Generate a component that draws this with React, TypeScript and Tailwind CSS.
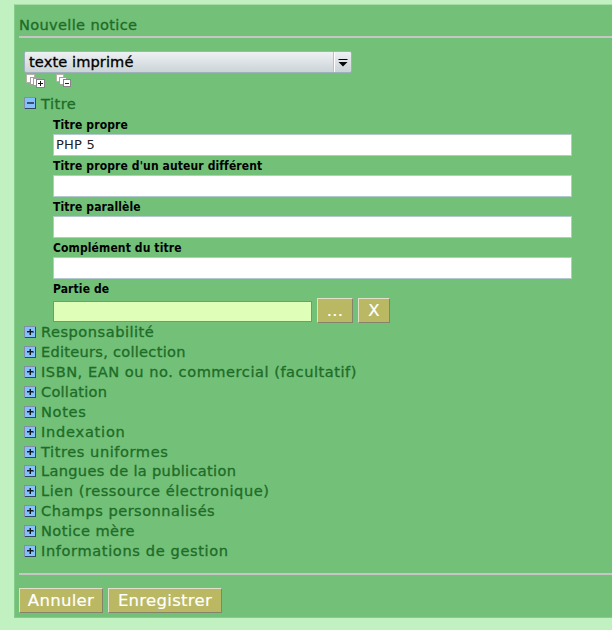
const sections: { label: string; tracking: string; height: string }[] = [
  { label: 'Responsabilité', tracking: 'tracking-[0.48px]', height: 'h-[20px]' },
  { label: 'Editeurs, collection', tracking: 'tracking-[0.25px]', height: 'h-[20px]' },
  { label: 'ISBN, EAN ou no. commercial (facultatif)', tracking: 'tracking-[0.5px]', height: 'h-[20px]' },
  { label: 'Collation', tracking: 'tracking-[0.22px]', height: 'h-[20px]' },
  { label: 'Notes', tracking: 'tracking-[0.62px]', height: 'h-[20px]' },
  { label: 'Indexation', tracking: 'tracking-[0.7px]', height: 'h-[20px]' },
  { label: 'Titres uniformes', tracking: 'tracking-[0.53px]', height: 'h-[19px]' },
  { label: 'Langues de la publication', tracking: 'tracking-[0.3px]', height: 'h-[20px]' },
  { label: 'Lien (ressource électronique)', tracking: 'tracking-[0.5px]', height: 'h-[20px]' },
  { label: 'Champs personnalisés', tracking: 'tracking-[0.45px]', height: 'h-[20px]' },
  { label: 'Notice mère', tracking: 'tracking-[0.42px]', height: 'h-[20px]' },
  { label: 'Informations de gestion', tracking: 'tracking-[0.58px]', height: 'h-[20px]' },
];

function Toggle({ open = false }: { open?: boolean }) {
  return (
    <svg width="12" height="12" viewBox="0 0 12 12" shapeRendering="crispEdges" className="mt-px shrink-0">
      <rect width="12" height="12" fill="#7f8fa6" />
      <rect x="1" y="1" width="11" height="11" fill="#30485e" />
      <rect x="1" y="1" width="10" height="10" fill="#85c0fc" />
      {open ? (
        <path d="M3 5h7v2H3z" fill="#35536f" />
      ) : (
        <>
          <path d="M3 5h7v2H3zM5 3h2v6H5z" fill="#4b6f94" />
          <path d="M3 5h6v1H3zM6 3h1v6H6z" fill="#101820" />
        </>
      )}
    </svg>
  );
}

function Stack({ plus = false }: { plus?: boolean }) {
  return (
    <svg width="19" height="14" viewBox="0 0 19 14" shapeRendering="crispEdges" className="shrink-0">
      {plus ? (
        <>
          <path d="M.5.5h8v8h-8z" fill="#fff" stroke="#b3b3a8" />
          <path d="M4.500 3.500h7v7h-7z" fill="#fff" stroke="#a2a2a2" />
          <path d="M7.500 4.500h7v7h-7z" fill="#fff" stroke="#a2a2a2" />
          <path d="M10.500 5.500h8v8h-8z" fill="#fff" stroke="#858585" />
          <path d="M12 9h5v1h-5zM14 7h1v5h-1z" fill="#111" />
        </>
      ) : (
        <>
          <path d="M.5.5h7v7h-7z" fill="#fff" stroke="#b3b3a8" />
          <path d="M3.500 3.500h7v7h-7z" fill="#fff" stroke="#a2a2a2" />
          <path d="M7.500 5.500h7v7h-7z" fill="#fff" stroke="#858585" />
          <path d="M9 9h4v1H9z" fill="#222" />
        </>
      )}
    </svg>
  );
}

const labelText = "font-['DejaVu_Sans_Condensed','DejaVu_Sans',sans-serif] text-[12px] leading-[21px] tracking-[0.12px] font-bold text-black";

function Field({ label, value = '' }: { label: string; value?: string }) {
  return (
    <div className="flex h-[41px] shrink-0 flex-col">
      <label className={`h-[19px] ${labelText}`}>{label}</label>
      <input
        defaultValue={value}
        aria-label={label}
        className="h-[22px] w-[519px] border border-[#b4c8cf] bg-white px-[2px] pb-[2px] text-[13px] tracking-[0.2px] text-[#222] outline-none"
      />
    </div>
  );
}

const button =
  'border border-t-[#e2e0c8] border-l-[#e2e0c8] border-r-[#85836a] border-b-[#85836a] bg-[#bab863] text-white text-center whitespace-nowrap text-[16.5px] leading-[23px] h-[25px] tracking-[0.3px] [-webkit-text-stroke:0.2px_#fff]';

const heading = 'text-[13.5px] text-[#1e6c28] [-webkit-text-stroke:0.3px_#1e6c28]';

const wide = 'inline-block origin-left scale-x-[1.08]';

export default function App() {
  return (
    <div className="h-[630px] w-[612px] overflow-hidden bg-[#c1f1c1] pt-[4px] pl-[14px] font-['DejaVu_Sans',sans-serif]">
      <main className="flex h-[614px] flex-col border-t border-b border-l border-[#85cb8a] border-t-[#a4dda6] bg-[#73c178] pl-[4px]">
        <h1 className={`h-[31px] pt-[10px] leading-[20px] tracking-[0.31px] ${heading}`}>
          <span className={wide}>Nouvelle notice</span>
        </h1>
        <div className="h-[2px] shrink-0 bg-[#c6c6c6]" />
        <div className="mt-[13px] ml-[5px] flex h-[22px] w-[328px] shrink-0 rounded-[2px] border border-[#9eb1bc] bg-linear-to-b from-[#eef1f4] to-[#cbd4d7]">
          <span className="w-[309px] border-r border-[#b8c1c4] pl-[4px] text-[13.5px] leading-[20px] tracking-[0.1px] text-black [-webkit-text-stroke:0.3px_#000]">
            <span className={wide}>texte imprimé</span>
          </span>
          <span className="flex flex-1 items-center justify-center border-l border-white">
            <svg width="10" height="9" viewBox="0 0 10 9">
              <path d="M.5 1h9v1h-9zM.5 4h9L5 8.500z" fill="#080808" />
            </svg>
          </span>
        </div>
        <div className="ml-[7px] flex h-[23px] gap-[11px] pt-[1px]">
          <Stack plus />
          <Stack />
        </div>
        <h2 className={`ml-[5px] flex h-[19px] gap-[5px] leading-[16px] tracking-[0.45px] ${heading}`}>
          <Toggle open />
          <span className={wide}>Titre</span>
        </h2>
        <div className="ml-[34px] flex h-[210px] shrink-0 flex-col">
          <Field label="Titre propre" value="PHP 5" />
          <Field label="Titre propre d'un auteur différent" />
          <Field label="Titre parallèle" />
          <Field label="Complément du titre" />
          <label className={`h-[19px] ${labelText}`}>Partie de</label>
          <div className="flex h-[26px] items-start">
            <input aria-label="Partie de" className="mt-[3px] h-[21px] w-[259px] border border-[#799f4b] bg-[#dfffb9] outline-none" />
            <button className={`${button} ml-[5px] w-[36px]`}>...</button>
            <button className={`${button} ml-[5px] w-[32px]`}>X</button>
          </div>
        </div>
        <div className={`ml-[5px] flex h-[248px] shrink-0 flex-col leading-[15px] ${heading}`}>
          {sections.map((s) => (
            <div key={s.label} className={`flex shrink-0 gap-[5px] whitespace-nowrap ${s.height} ${s.tracking}`}>
              <Toggle />
              <span className={wide}>{s.label}</span>
            </div>
          ))}
        </div>
        <div className="h-[2px] shrink-0 bg-[#c6c6c6]" />
        <div className="mt-[13px] flex gap-[5px]">
          <button className={`${button} w-[84px]`}>Annuler</button>
          <button className={`${button} w-[114px]`}>Enregistrer</button>
        </div>
      </main>
    </div>
  );
}
